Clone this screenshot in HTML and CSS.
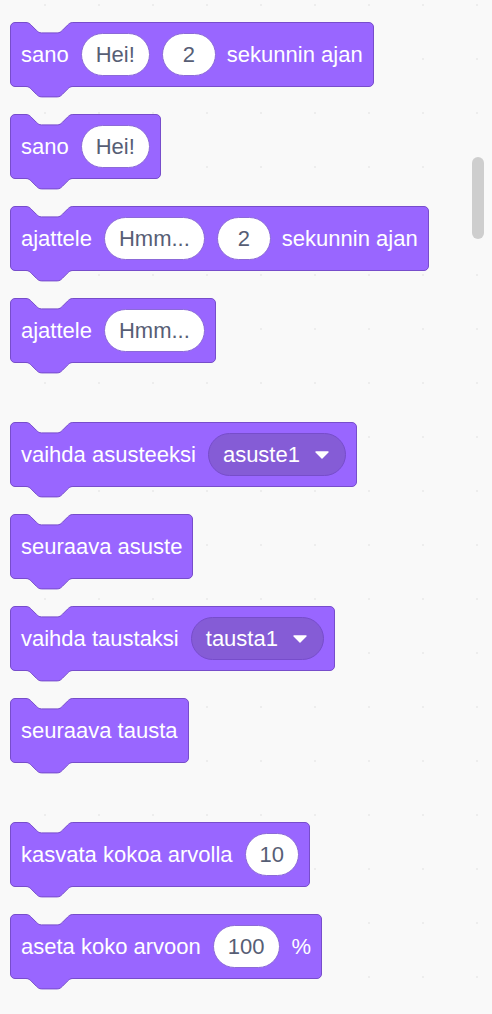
FILE: index.html
```html
<!DOCTYPE html>
<html lang="fi">
<head>
<meta charset="utf-8">
<title>Ulkonäkö</title>
<link rel="stylesheet" href="styles.css">
</head>
<body>
<div class="palette">
  <section class="group">
    <div class="blk">
      <svg class="notch" width="48" height="12" viewBox="0 0 48 12"><path class="notch-fill" d="M0,0 L0,0.5 c2.6,0 3.9,1.3 5.2,2.6 l5.2,5.2 c1.3,1.3 2.6,2.6 5.2,2.6 h15.6 c2.6,0 3.9,-1.3 5.2,-2.6 l5.2,-5.2 c1.3,-1.3 2.6,-2.6 5.2,-2.6 L46.8,0 Z"/><path class="notch-line" d="M0,0.5 c2.6,0 3.9,1.3 5.2,2.6 l5.2,5.2 c1.3,1.3 2.6,2.6 5.2,2.6 h15.6 c2.6,0 3.9,-1.3 5.2,-2.6 l5.2,-5.2 c1.3,-1.3 2.6,-2.6 5.2,-2.6"/></svg>
      <span class="lbl">sano</span><span class="oval">Hei!</span><span class="oval">2</span><span class="lbl">sekunnin ajan</span>
      <svg class="tab" width="48" height="13" viewBox="0 0 48 13"><path class="tab-fill" d="M0,0 L0,0.5 c2.6,0 3.9,1.3 5.2,2.6 l5.2,5.2 c1.3,1.3 2.6,2.6 5.2,2.6 h15.6 c2.6,0 3.9,-1.3 5.2,-2.6 l5.2,-5.2 c1.3,-1.3 2.6,-2.6 5.2,-2.6 L46.8,0 Z"/><path class="tab-line" d="M0,0.5 c2.6,0 3.9,1.3 5.2,2.6 l5.2,5.2 c1.3,1.3 2.6,2.6 5.2,2.6 h15.6 c2.6,0 3.9,-1.3 5.2,-2.6 l5.2,-5.2 c1.3,-1.3 2.6,-2.6 5.2,-2.6"/></svg>
    </div>
    <div class="blk">
      <svg class="notch" width="48" height="12" viewBox="0 0 48 12"><path class="notch-fill" d="M0,0 L0,0.5 c2.6,0 3.9,1.3 5.2,2.6 l5.2,5.2 c1.3,1.3 2.6,2.6 5.2,2.6 h15.6 c2.6,0 3.9,-1.3 5.2,-2.6 l5.2,-5.2 c1.3,-1.3 2.6,-2.6 5.2,-2.6 L46.8,0 Z"/><path class="notch-line" d="M0,0.5 c2.6,0 3.9,1.3 5.2,2.6 l5.2,5.2 c1.3,1.3 2.6,2.6 5.2,2.6 h15.6 c2.6,0 3.9,-1.3 5.2,-2.6 l5.2,-5.2 c1.3,-1.3 2.6,-2.6 5.2,-2.6"/></svg>
      <span class="lbl">sano</span><span class="oval">Hei!</span>
      <svg class="tab" width="48" height="13" viewBox="0 0 48 13"><path class="tab-fill" d="M0,0 L0,0.5 c2.6,0 3.9,1.3 5.2,2.6 l5.2,5.2 c1.3,1.3 2.6,2.6 5.2,2.6 h15.6 c2.6,0 3.9,-1.3 5.2,-2.6 l5.2,-5.2 c1.3,-1.3 2.6,-2.6 5.2,-2.6 L46.8,0 Z"/><path class="tab-line" d="M0,0.5 c2.6,0 3.9,1.3 5.2,2.6 l5.2,5.2 c1.3,1.3 2.6,2.6 5.2,2.6 h15.6 c2.6,0 3.9,-1.3 5.2,-2.6 l5.2,-5.2 c1.3,-1.3 2.6,-2.6 5.2,-2.6"/></svg>
    </div>
    <div class="blk">
      <svg class="notch" width="48" height="12" viewBox="0 0 48 12"><path class="notch-fill" d="M0,0 L0,0.5 c2.6,0 3.9,1.3 5.2,2.6 l5.2,5.2 c1.3,1.3 2.6,2.6 5.2,2.6 h15.6 c2.6,0 3.9,-1.3 5.2,-2.6 l5.2,-5.2 c1.3,-1.3 2.6,-2.6 5.2,-2.6 L46.8,0 Z"/><path class="notch-line" d="M0,0.5 c2.6,0 3.9,1.3 5.2,2.6 l5.2,5.2 c1.3,1.3 2.6,2.6 5.2,2.6 h15.6 c2.6,0 3.9,-1.3 5.2,-2.6 l5.2,-5.2 c1.3,-1.3 2.6,-2.6 5.2,-2.6"/></svg>
      <span class="lbl">ajattele</span><span class="oval">Hmm...</span><span class="oval">2</span><span class="lbl">sekunnin ajan</span>
      <svg class="tab" width="48" height="13" viewBox="0 0 48 13"><path class="tab-fill" d="M0,0 L0,0.5 c2.6,0 3.9,1.3 5.2,2.6 l5.2,5.2 c1.3,1.3 2.6,2.6 5.2,2.6 h15.6 c2.6,0 3.9,-1.3 5.2,-2.6 l5.2,-5.2 c1.3,-1.3 2.6,-2.6 5.2,-2.6 L46.8,0 Z"/><path class="tab-line" d="M0,0.5 c2.6,0 3.9,1.3 5.2,2.6 l5.2,5.2 c1.3,1.3 2.6,2.6 5.2,2.6 h15.6 c2.6,0 3.9,-1.3 5.2,-2.6 l5.2,-5.2 c1.3,-1.3 2.6,-2.6 5.2,-2.6"/></svg>
    </div>
    <div class="blk">
      <svg class="notch" width="48" height="12" viewBox="0 0 48 12"><path class="notch-fill" d="M0,0 L0,0.5 c2.6,0 3.9,1.3 5.2,2.6 l5.2,5.2 c1.3,1.3 2.6,2.6 5.2,2.6 h15.6 c2.6,0 3.9,-1.3 5.2,-2.6 l5.2,-5.2 c1.3,-1.3 2.6,-2.6 5.2,-2.6 L46.8,0 Z"/><path class="notch-line" d="M0,0.5 c2.6,0 3.9,1.3 5.2,2.6 l5.2,5.2 c1.3,1.3 2.6,2.6 5.2,2.6 h15.6 c2.6,0 3.9,-1.3 5.2,-2.6 l5.2,-5.2 c1.3,-1.3 2.6,-2.6 5.2,-2.6"/></svg>
      <span class="lbl">ajattele</span><span class="oval">Hmm...</span>
      <svg class="tab" width="48" height="13" viewBox="0 0 48 13"><path class="tab-fill" d="M0,0 L0,0.5 c2.6,0 3.9,1.3 5.2,2.6 l5.2,5.2 c1.3,1.3 2.6,2.6 5.2,2.6 h15.6 c2.6,0 3.9,-1.3 5.2,-2.6 l5.2,-5.2 c1.3,-1.3 2.6,-2.6 5.2,-2.6 L46.8,0 Z"/><path class="tab-line" d="M0,0.5 c2.6,0 3.9,1.3 5.2,2.6 l5.2,5.2 c1.3,1.3 2.6,2.6 5.2,2.6 h15.6 c2.6,0 3.9,-1.3 5.2,-2.6 l5.2,-5.2 c1.3,-1.3 2.6,-2.6 5.2,-2.6"/></svg>
    </div>
  </section>

  <section class="group">
    <div class="blk">
      <svg class="notch" width="48" height="12" viewBox="0 0 48 12"><path class="notch-fill" d="M0,0 L0,0.5 c2.6,0 3.9,1.3 5.2,2.6 l5.2,5.2 c1.3,1.3 2.6,2.6 5.2,2.6 h15.6 c2.6,0 3.9,-1.3 5.2,-2.6 l5.2,-5.2 c1.3,-1.3 2.6,-2.6 5.2,-2.6 L46.8,0 Z"/><path class="notch-line" d="M0,0.5 c2.6,0 3.9,1.3 5.2,2.6 l5.2,5.2 c1.3,1.3 2.6,2.6 5.2,2.6 h15.6 c2.6,0 3.9,-1.3 5.2,-2.6 l5.2,-5.2 c1.3,-1.3 2.6,-2.6 5.2,-2.6"/></svg>
      <span class="lbl">vaihda asusteeksi</span><span class="dd">asuste1<svg class="arrow" width="14" height="8" viewBox="0 0 14 8"><path d="M1,1 L13,1 L7,7 Z"/></svg></span>
      <svg class="tab" width="48" height="13" viewBox="0 0 48 13"><path class="tab-fill" d="M0,0 L0,0.5 c2.6,0 3.9,1.3 5.2,2.6 l5.2,5.2 c1.3,1.3 2.6,2.6 5.2,2.6 h15.6 c2.6,0 3.9,-1.3 5.2,-2.6 l5.2,-5.2 c1.3,-1.3 2.6,-2.6 5.2,-2.6 L46.8,0 Z"/><path class="tab-line" d="M0,0.5 c2.6,0 3.9,1.3 5.2,2.6 l5.2,5.2 c1.3,1.3 2.6,2.6 5.2,2.6 h15.6 c2.6,0 3.9,-1.3 5.2,-2.6 l5.2,-5.2 c1.3,-1.3 2.6,-2.6 5.2,-2.6"/></svg>
    </div>
    <div class="blk">
      <svg class="notch" width="48" height="12" viewBox="0 0 48 12"><path class="notch-fill" d="M0,0 L0,0.5 c2.6,0 3.9,1.3 5.2,2.6 l5.2,5.2 c1.3,1.3 2.6,2.6 5.2,2.6 h15.6 c2.6,0 3.9,-1.3 5.2,-2.6 l5.2,-5.2 c1.3,-1.3 2.6,-2.6 5.2,-2.6 L46.8,0 Z"/><path class="notch-line" d="M0,0.5 c2.6,0 3.9,1.3 5.2,2.6 l5.2,5.2 c1.3,1.3 2.6,2.6 5.2,2.6 h15.6 c2.6,0 3.9,-1.3 5.2,-2.6 l5.2,-5.2 c1.3,-1.3 2.6,-2.6 5.2,-2.6"/></svg>
      <span class="lbl">seuraava asuste</span>
      <svg class="tab" width="48" height="13" viewBox="0 0 48 13"><path class="tab-fill" d="M0,0 L0,0.5 c2.6,0 3.9,1.3 5.2,2.6 l5.2,5.2 c1.3,1.3 2.6,2.6 5.2,2.6 h15.6 c2.6,0 3.9,-1.3 5.2,-2.6 l5.2,-5.2 c1.3,-1.3 2.6,-2.6 5.2,-2.6 L46.8,0 Z"/><path class="tab-line" d="M0,0.5 c2.6,0 3.9,1.3 5.2,2.6 l5.2,5.2 c1.3,1.3 2.6,2.6 5.2,2.6 h15.6 c2.6,0 3.9,-1.3 5.2,-2.6 l5.2,-5.2 c1.3,-1.3 2.6,-2.6 5.2,-2.6"/></svg>
    </div>
    <div class="blk">
      <svg class="notch" width="48" height="12" viewBox="0 0 48 12"><path class="notch-fill" d="M0,0 L0,0.5 c2.6,0 3.9,1.3 5.2,2.6 l5.2,5.2 c1.3,1.3 2.6,2.6 5.2,2.6 h15.6 c2.6,0 3.9,-1.3 5.2,-2.6 l5.2,-5.2 c1.3,-1.3 2.6,-2.6 5.2,-2.6 L46.8,0 Z"/><path class="notch-line" d="M0,0.5 c2.6,0 3.9,1.3 5.2,2.6 l5.2,5.2 c1.3,1.3 2.6,2.6 5.2,2.6 h15.6 c2.6,0 3.9,-1.3 5.2,-2.6 l5.2,-5.2 c1.3,-1.3 2.6,-2.6 5.2,-2.6"/></svg>
      <span class="lbl">vaihda taustaksi</span><span class="dd">tausta1<svg class="arrow" width="14" height="8" viewBox="0 0 14 8"><path d="M1,1 L13,1 L7,7 Z"/></svg></span>
      <svg class="tab" width="48" height="13" viewBox="0 0 48 13"><path class="tab-fill" d="M0,0 L0,0.5 c2.6,0 3.9,1.3 5.2,2.6 l5.2,5.2 c1.3,1.3 2.6,2.6 5.2,2.6 h15.6 c2.6,0 3.9,-1.3 5.2,-2.6 l5.2,-5.2 c1.3,-1.3 2.6,-2.6 5.2,-2.6 L46.8,0 Z"/><path class="tab-line" d="M0,0.5 c2.6,0 3.9,1.3 5.2,2.6 l5.2,5.2 c1.3,1.3 2.6,2.6 5.2,2.6 h15.6 c2.6,0 3.9,-1.3 5.2,-2.6 l5.2,-5.2 c1.3,-1.3 2.6,-2.6 5.2,-2.6"/></svg>
    </div>
    <div class="blk">
      <svg class="notch" width="48" height="12" viewBox="0 0 48 12"><path class="notch-fill" d="M0,0 L0,0.5 c2.6,0 3.9,1.3 5.2,2.6 l5.2,5.2 c1.3,1.3 2.6,2.6 5.2,2.6 h15.6 c2.6,0 3.9,-1.3 5.2,-2.6 l5.2,-5.2 c1.3,-1.3 2.6,-2.6 5.2,-2.6 L46.8,0 Z"/><path class="notch-line" d="M0,0.5 c2.6,0 3.9,1.3 5.2,2.6 l5.2,5.2 c1.3,1.3 2.6,2.6 5.2,2.6 h15.6 c2.6,0 3.9,-1.3 5.2,-2.6 l5.2,-5.2 c1.3,-1.3 2.6,-2.6 5.2,-2.6"/></svg>
      <span class="lbl">seuraava tausta</span>
      <svg class="tab" width="48" height="13" viewBox="0 0 48 13"><path class="tab-fill" d="M0,0 L0,0.5 c2.6,0 3.9,1.3 5.2,2.6 l5.2,5.2 c1.3,1.3 2.6,2.6 5.2,2.6 h15.6 c2.6,0 3.9,-1.3 5.2,-2.6 l5.2,-5.2 c1.3,-1.3 2.6,-2.6 5.2,-2.6 L46.8,0 Z"/><path class="tab-line" d="M0,0.5 c2.6,0 3.9,1.3 5.2,2.6 l5.2,5.2 c1.3,1.3 2.6,2.6 5.2,2.6 h15.6 c2.6,0 3.9,-1.3 5.2,-2.6 l5.2,-5.2 c1.3,-1.3 2.6,-2.6 5.2,-2.6"/></svg>
    </div>
  </section>

  <section class="group">
    <div class="blk">
      <svg class="notch" width="48" height="12" viewBox="0 0 48 12"><path class="notch-fill" d="M0,0 L0,0.5 c2.6,0 3.9,1.3 5.2,2.6 l5.2,5.2 c1.3,1.3 2.6,2.6 5.2,2.6 h15.6 c2.6,0 3.9,-1.3 5.2,-2.6 l5.2,-5.2 c1.3,-1.3 2.6,-2.6 5.2,-2.6 L46.8,0 Z"/><path class="notch-line" d="M0,0.5 c2.6,0 3.9,1.3 5.2,2.6 l5.2,5.2 c1.3,1.3 2.6,2.6 5.2,2.6 h15.6 c2.6,0 3.9,-1.3 5.2,-2.6 l5.2,-5.2 c1.3,-1.3 2.6,-2.6 5.2,-2.6"/></svg>
      <span class="lbl">kasvata kokoa arvolla</span><span class="oval">10</span>
      <svg class="tab" width="48" height="13" viewBox="0 0 48 13"><path class="tab-fill" d="M0,0 L0,0.5 c2.6,0 3.9,1.3 5.2,2.6 l5.2,5.2 c1.3,1.3 2.6,2.6 5.2,2.6 h15.6 c2.6,0 3.9,-1.3 5.2,-2.6 l5.2,-5.2 c1.3,-1.3 2.6,-2.6 5.2,-2.6 L46.8,0 Z"/><path class="tab-line" d="M0,0.5 c2.6,0 3.9,1.3 5.2,2.6 l5.2,5.2 c1.3,1.3 2.6,2.6 5.2,2.6 h15.6 c2.6,0 3.9,-1.3 5.2,-2.6 l5.2,-5.2 c1.3,-1.3 2.6,-2.6 5.2,-2.6"/></svg>
    </div>
    <div class="blk">
      <svg class="notch" width="48" height="12" viewBox="0 0 48 12"><path class="notch-fill" d="M0,0 L0,0.5 c2.6,0 3.9,1.3 5.2,2.6 l5.2,5.2 c1.3,1.3 2.6,2.6 5.2,2.6 h15.6 c2.6,0 3.9,-1.3 5.2,-2.6 l5.2,-5.2 c1.3,-1.3 2.6,-2.6 5.2,-2.6 L46.8,0 Z"/><path class="notch-line" d="M0,0.5 c2.6,0 3.9,1.3 5.2,2.6 l5.2,5.2 c1.3,1.3 2.6,2.6 5.2,2.6 h15.6 c2.6,0 3.9,-1.3 5.2,-2.6 l5.2,-5.2 c1.3,-1.3 2.6,-2.6 5.2,-2.6"/></svg>
      <span class="lbl">aseta koko arvoon</span><span class="oval">100</span><span class="lbl pct">%</span>
      <svg class="tab" width="48" height="13" viewBox="0 0 48 13"><path class="tab-fill" d="M0,0 L0,0.5 c2.6,0 3.9,1.3 5.2,2.6 l5.2,5.2 c1.3,1.3 2.6,2.6 5.2,2.6 h15.6 c2.6,0 3.9,-1.3 5.2,-2.6 l5.2,-5.2 c1.3,-1.3 2.6,-2.6 5.2,-2.6 L46.8,0 Z"/><path class="tab-line" d="M0,0.5 c2.6,0 3.9,1.3 5.2,2.6 l5.2,5.2 c1.3,1.3 2.6,2.6 5.2,2.6 h15.6 c2.6,0 3.9,-1.3 5.2,-2.6 l5.2,-5.2 c1.3,-1.3 2.6,-2.6 5.2,-2.6"/></svg>
    </div>
  </section>
</div>
<div class="scrollbar"></div>
</body>
</html>
```

FILE: styles.css
```css
html, body {
  margin: 0;
  padding: 0;
}

body {
  width: 492px;
  height: 1014px;
  overflow: hidden;
  position: relative;
  background-color: #f9f9f9;
  background-image: radial-gradient(circle, #ededed 0.8px, rgba(249,249,249,0) 1.5px);
  background-size: 54px 54px;
  background-position: 18px 32px;
  font-family: "Liberation Sans", Arial, Helvetica, sans-serif;
  font-size: 22px;
}

.palette {
  display: flex;
  flex-direction: column;
  gap: 59px;
  padding: 22px 0 0 10px;
}

.group {
  display: flex;
  flex-direction: column;
  align-items: flex-start;
  gap: 27px;
}

.blk {
  position: relative;
  box-sizing: border-box;
  height: 65px;
  display: flex;
  align-items: center;
  gap: 11px;
  padding: 0 10px;
  background: #9966ff;
  border: 1px solid #774dcb;
  border-radius: 5px;
  color: #ffffff;
  white-space: nowrap;
}

.lbl {
  line-height: 1;
}

.lbl + .oval,
.lbl + .dd {
  margin-left: 1px;
}

.oval + .oval {
  margin-left: 1px;
}

.pct {
  margin-left: 1px;
}

.oval {
  box-sizing: border-box;
  height: 43px;
  min-width: 54px;
  padding: 0 14px;
  display: flex;
  align-items: center;
  justify-content: center;
  background: #ffffff;
  border: 1px solid #8c6ad8;
  border-radius: 22px;
  color: #575e75;
}

.dd {
  box-sizing: border-box;
  height: 43px;
  padding: 0 16px 0 14px;
  display: flex;
  align-items: center;
  gap: 15px;
  background: #855cd6;
  border: 1px solid #774dcb;
  border-radius: 22px;
  color: #ffffff;
}

.arrow {
  display: block;
}

.arrow path {
  fill: #ffffff;
  stroke: #ffffff;
  stroke-width: 1.4;
  stroke-linejoin: round;
}

.notch {
  position: absolute;
  left: 15px;
  top: -1px;
  display: block;
}

.notch-fill {
  fill: #f9f9f9;
}

.notch-line,
.tab-line {
  fill: none;
  stroke: #774dcb;
  stroke-width: 1;
}

.tab {
  position: absolute;
  left: 15px;
  top: 100%;
  display: block;
}

.tab-fill {
  fill: #9966ff;
}

.scrollbar {
  position: absolute;
  left: 472px;
  top: 157px;
  width: 12px;
  height: 82px;
  border-radius: 6px;
  background: #cecece;
}
```
